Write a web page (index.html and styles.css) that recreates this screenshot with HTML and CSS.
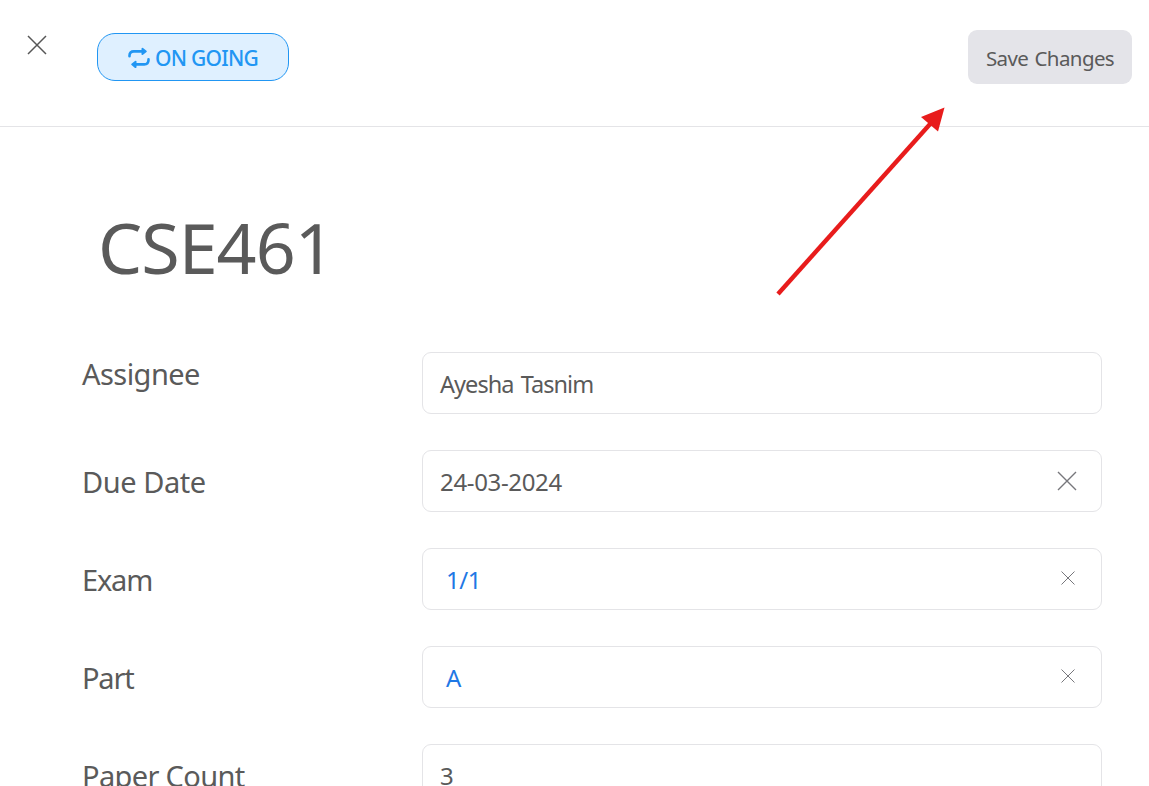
FILE: index.html
```html
<!DOCTYPE html>
<html lang="en">
<head>
<meta charset="utf-8">
<title>CSE461</title>
<link rel="stylesheet" href="styles.css">
</head>
<body>
<header class="topbar">
  <button class="close" aria-label="Close"><svg width="20" height="20" viewBox="0 0 20 20"><path d="M1 1L19 19M19 1L1 19"/></svg></button>
  <div class="status">
    <svg class="repeat" width="22" height="22" viewBox="0 0 22 22">
      <path class="line" d="M1.500 9.200V8.600Q1.500 4.400 5.800 4.400H15M20.500 12.400V13Q20.500 17.400 16.200 17.400H7"/>
      <path class="head" d="M13.500 1.500Q14 .5 15 1L18.500 3.700Q19.200 4.400 18.500 5.100L15 7.800Q13.500 8.400 13.500 7.300ZM8.500 14.500Q8.500 13.300 7 13.900L3.500 16.700Q2.800 17.400 3.500 18.100L7 20.900Q8.500 21.400 8.500 20.300Z"/>
    </svg>
    <span class="status-text">ON GOING</span>
  </div>
  <button class="save"><span>Save Changes</span></button>
</header>
<main class="content">
  <h1 class="title">CSE461</h1>
  <div class="row"><label class="label assignee">Assignee</label><div class="field"><span class="value name">Ayesha Tasnim</span></div></div>
  <div class="row"><label class="label due">Due Date</label><div class="field"><span class="value date">24-03-2024</span><svg class="clear large" width="20" height="20" viewBox="0 0 20 20"><path d="M1 1L19 19M19 1L1 19"/></svg></div></div>
  <div class="row"><label class="label exam">Exam</label><div class="field"><span class="value link">1/1</span><svg class="clear small" width="14" height="14" viewBox="0 0 14 14"><path d="M.5 .5L13.5 13.5M13.5 .5L.5 13.5"/></svg></div></div>
  <div class="row"><label class="label part">Part</label><div class="field"><span class="value link">A</span><svg class="clear small" width="14" height="14" viewBox="0 0 14 14"><path d="M.5 .5L13.5 13.5M13.5 .5L.5 13.5"/></svg></div></div>
  <div class="row"><label class="label count">Paper Count</label><div class="field"><span class="value">3</span></div></div>
</main>
<svg class="pointer" width="180" height="200" viewBox="770 100 180 200"><path class="shaft" d="M778 294L931 123"/><path class="tip" d="M944.500 107.500L921 117L938 131.500Z"/></svg>
</body>
</html>
```
FILE: styles.css
```css
* { box-sizing: border-box; }
body { margin: 0; height: 786px; overflow: hidden; position: relative; background: #fff; color: #5a5a5a; font-family: "Segoe UI", "Noto Sans", "Open Sans", sans-serif; }
button { border: 0; padding: 0; background: none; color: inherit; font-family: inherit; }
svg { display: block; flex: none; }
.topbar { display: flex; align-items: flex-start; height: 127px; padding: 30px 17px 0 27px; border-bottom: 1px solid #e4e4e7; }
.close { margin-top: 5px; }
.close path { stroke: #575757; stroke-width: 1.5; }
.status { display: flex; align-items: center; gap: 5px; width: 192px; height: 48px; margin: 3px 0 0 50px; padding-left: 30px; border: 1px solid #2196f3; border-radius: 18px; background: #dff0ff; color: #2196f3; white-space: nowrap; }
.status-text { font-size: 21px; font-weight: 500; line-height: 46px; padding-top: 2px; letter-spacing: -.75px; }
.repeat { margin-top: 1px; }
.line { fill: none; stroke: #2196f3; stroke-width: 2.6; stroke-linecap: round; }
.head { fill: #2196f3; }
.save { width: 164px; height: 54px; margin-left: auto; border-radius: 9px; background: #e4e4e9; font-size: 20.5px; line-height: 52px; padding-top: 2px; white-space: nowrap; letter-spacing: -.6px; word-spacing: 1.5px; }
.content { padding: 72px 47px 0 82px; }
.title { margin: 0 0 57px 16px; font-size: 70px; font-weight: 400; line-height: 96px; letter-spacing: -1px; }
.row { display: flex; height: 62px; margin-bottom: 36px; }
.label { width: 340px; font-size: 29px; line-height: 64px; white-space: nowrap; }
.assignee { line-height: 44px; letter-spacing: -.55px; }
.due { letter-spacing: -.45px; }
.exam { letter-spacing: -1.2px; }
.part { letter-spacing: -1.2px; }
.count { letter-spacing: -.65px; }
.field { display: flex; flex: 1; align-items: center; justify-content: space-between; padding: 0 24px 0 17px; border: 1px solid #e4e4e7; border-radius: 9px; }
.value { font-size: 24px; line-height: 60px; padding-top: 2px; white-space: nowrap; }
.name { font-size: 23.5px; letter-spacing: -.95px; word-spacing: 2px; }
.date { letter-spacing: -.35px; }
.link { color: #1f78e5; padding-left: 6px; letter-spacing: -.5px; }
.clear path { stroke: #77777c; stroke-width: 1; }
.clear.large path { stroke-width: 1.4; }
.clear.small { margin: 0 2px 2px 0; }
.pointer { position: absolute; left: 770px; top: 100px; pointer-events: none; }
.shaft { stroke: #e81c1c; stroke-width: 4.4; }
.tip { fill: #e81c1c; }
```
